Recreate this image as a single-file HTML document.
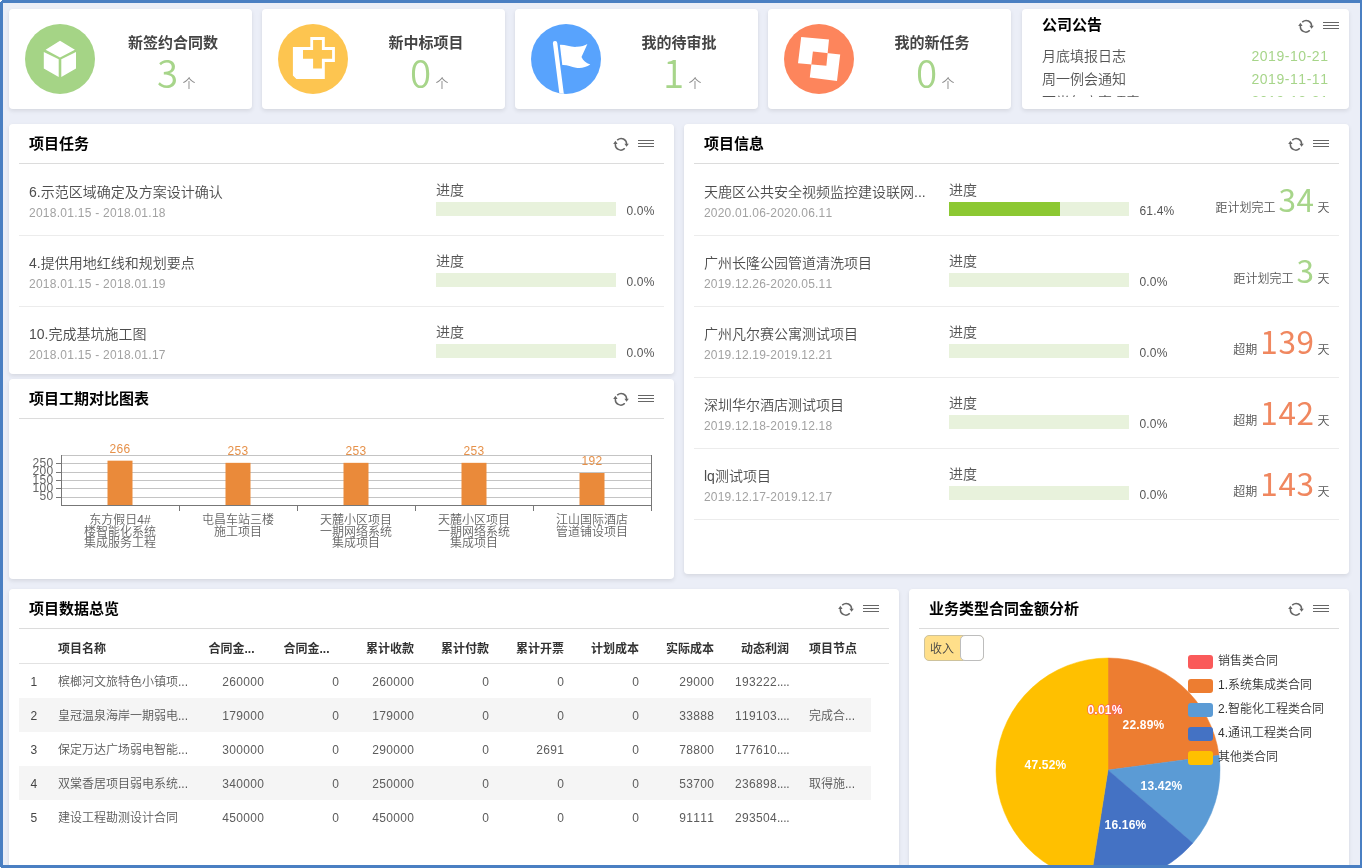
<!DOCTYPE html>
<html lang="zh-CN">
<head>
<meta charset="utf-8">
<title>项目管理工作台</title>
<style>
*{box-sizing:border-box;margin:0;padding:0}
html,body{width:1362px;height:868px;overflow:hidden}
body{background:#ebeef7;font-kerning:none;font-weight:350;font-family:"Liberation Sans","Noto Sans CJK SC",sans-serif;position:relative;color:#555;font-size:14px}
#app{position:absolute;left:0;top:0;width:1362px;height:868px;overflow:hidden;transform:translateZ(0);-webkit-font-smoothing:antialiased}
.a{position:absolute}
.t{position:absolute;white-space:nowrap;line-height:20px;height:20px}
.card{position:absolute;background:#fff;border-radius:4px;box-shadow:0 2px 4px rgba(0,0,0,.09),0 0 4px rgba(0,0,0,.025)}
.panel{position:absolute;background:#fff;border-radius:4px;box-shadow:0 2px 4px rgba(0,0,0,.09),0 0 4px rgba(0,0,0,.025);overflow:hidden}
.hr{position:absolute;height:1px;background:#dcdcdc}
.hr2{position:absolute;height:1px;background:#ececec}
.bar{position:absolute;height:14px;background:#e8f2dc}
.bar i{position:absolute;left:0;top:0;bottom:0;background:#8cc832}
.ico{position:absolute}
.frame{position:absolute;background:#4a7fc2}
</style>
</head>
<body>
<div id="app">
<div class="card" style="left:9px;top:9px;width:243px;height:100px"></div>
<svg class="ico" style="left:25px;top:24px" width="70" height="70" viewBox="0 0 70 70"><defs><clipPath id="c0"><circle cx="35" cy="35" r="35"/></clipPath></defs><circle cx="35" cy="35" r="35" fill="#a5d486"/><g clip-path="url(#c0)"><path fill="#fff" d="M35 16.8L49.9 25.8L35 33.5L20.6 25.8Z M18.8 27.9L33.7 35.2V53L18.8 44.4Z M36.3 35.2L51 27.9V44.4L36.3 53Z"/></g></svg>
<div class="t" style="top:32.5px;font-size:15px;color:#444;line-height:20px;height:20px;font-weight:700;left:-127px;width:600px;text-align:center;">新签约合同数</div>
<div class="t" style="top:47px;font-size:38.5px;color:#a7d58a;line-height:48px;height:48px;left:-132.5px;width:600px;text-align:center;font-family:'Noto Sans CJK SC','Liberation Sans',sans-serif;">3</div>
<div class="t" style="top:73.5px;font-size:13px;color:#8c8c8c;line-height:20px;height:20px;font-weight:350;left:182.5px;">个</div>
<div class="card" style="left:262px;top:9px;width:243px;height:100px"></div>
<svg class="ico" style="left:278px;top:24px" width="70" height="70" viewBox="0 0 70 70"><defs><clipPath id="c1"><circle cx="35" cy="35" r="35"/></clipPath></defs><circle cx="35" cy="35" r="35" fill="#fdc550"/><g clip-path="url(#c1)"><path fill="#fff" d="M14.9 23H32.3V13H46.8V23H56.9V37.9H46.8V55.1H18.4L14.9 51.6Z"/><path fill="#fdc550" d="M35.1 15.9H43.9V26H54.1V34.8H43.9V44.4H35.1V34.8H25V26H35.1Z"/></g></svg>
<div class="t" style="top:32.5px;font-size:15px;color:#444;line-height:20px;height:20px;font-weight:700;left:126px;width:600px;text-align:center;">新中标项目</div>
<div class="t" style="top:47px;font-size:38.5px;color:#a7d58a;line-height:48px;height:48px;left:120.5px;width:600px;text-align:center;font-family:'Noto Sans CJK SC','Liberation Sans',sans-serif;">0</div>
<div class="t" style="top:73.5px;font-size:13px;color:#8c8c8c;line-height:20px;height:20px;font-weight:350;left:435.5px;">个</div>
<div class="card" style="left:515px;top:9px;width:243px;height:100px"></div>
<svg class="ico" style="left:531px;top:24px" width="70" height="70" viewBox="0 0 70 70"><defs><clipPath id="c2"><circle cx="35" cy="35" r="35"/></clipPath></defs><circle cx="35" cy="35" r="35" fill="#58a3fd"/><g clip-path="url(#c2)"><path fill="none" stroke="#fff" stroke-width="4.4" stroke-linecap="round" d="M24.1 19.3L30.9 72"/><path fill="#fff" d="M28.9 20.9C34 20.5 40 23.5 46 22.8C50 22.4 54 21.5 56.4 19.9L50.5 33C52 36.5 55 39 59.3 40.6C55 43.5 50 44.6 45 43.8C40 42.8 36 40.7 31.3 41Z"/></g></svg>
<div class="t" style="top:32.5px;font-size:15px;color:#444;line-height:20px;height:20px;font-weight:700;left:379px;width:600px;text-align:center;">我的待审批</div>
<div class="t" style="top:47px;font-size:38.5px;color:#a7d58a;line-height:48px;height:48px;left:373.5px;width:600px;text-align:center;font-family:'Noto Sans CJK SC','Liberation Sans',sans-serif;">1</div>
<div class="t" style="top:73.5px;font-size:13px;color:#8c8c8c;line-height:20px;height:20px;font-weight:350;left:688.5px;">个</div>
<div class="card" style="left:768px;top:9px;width:243px;height:100px"></div>
<svg class="ico" style="left:784px;top:24px" width="70" height="70" viewBox="0 0 70 70"><defs><clipPath id="c3"><circle cx="35" cy="35" r="35"/></clipPath></defs><circle cx="35" cy="35" r="35" fill="#fd855c"/><g clip-path="url(#c3)"><path fill="#fff" fill-rule="evenodd" d="M17.2 13L45 15.6L42.4 41.8L14 39.3Z M28.9 27.5L56.2 30.4L53 56.9L25.8 53.5Z"/></g></svg>
<div class="t" style="top:32.5px;font-size:15px;color:#444;line-height:20px;height:20px;font-weight:700;left:632px;width:600px;text-align:center;">我的新任务</div>
<div class="t" style="top:47px;font-size:38.5px;color:#a7d58a;line-height:48px;height:48px;left:626.5px;width:600px;text-align:center;font-family:'Noto Sans CJK SC','Liberation Sans',sans-serif;">0</div>
<div class="t" style="top:73.5px;font-size:13px;color:#8c8c8c;line-height:20px;height:20px;font-weight:350;left:941.5px;">个</div>
<div class="card" style="left:1022px;top:9px;width:327px;height:100px;overflow:hidden">
</div>
<div class="t" style="top:15px;font-size:15px;color:#000;line-height:20px;height:20px;font-weight:700;left:1042px;">公司公告</div>
<svg class="ico" style="left:1298px;top:19px" width="42" height="14" viewBox="0 0 42 14">
<g transform="translate(0 0.45)"><g fill="none" stroke="#666" stroke-width="1.45" stroke-linecap="round">
<path d="M4.6 2.4A5.4 5.4 0 0 1 13.6 6.6"/><path d="M11.4 11.2A5.4 5.4 0 0 1 2.4 6.6"/>
</g>
<path d="M11.4 6.2h4.4L13.6 9.2z" fill="#666"/><path d="M0.2 6.6h4.4L2.4 3.4z" fill="#666"/></g>
<g stroke="#666" stroke-width="1.1"><path d="M25 3.5h16M25 6.5h16M25 9.5h16"/></g>
</svg>
<div class="a" style="left:1022px;top:9px;width:327px;height:88px;overflow:hidden">
<div class="t" style="left:20px;top:36.5px;font-size:14px;color:#555">月底填报日志</div>
<div class="t" style="right:21px;top:36.5px;font-size:14px;color:#a7d58a;letter-spacing:0.55px;margin-right:-0.55px">2019-10-21</div>
<div class="t" style="left:20px;top:60px;font-size:14px;color:#555">周一例会通知</div>
<div class="t" style="right:21px;top:60px;font-size:14px;color:#a7d58a;letter-spacing:0.55px;margin-right:-0.55px">2019-11-11</div>
<div class="t" style="left:20px;top:83.2px;font-size:14px;color:#555">下半年度事项表</div>
<div class="t" style="right:21px;top:81.9px;font-size:14px;color:#a7d58a;letter-spacing:0.55px;margin-right:-0.55px">2019-12-31</div>
</div>
<div class="panel" style="left:9px;top:124px;width:665px;height:250px"></div>
<div class="t" style="top:134px;font-size:15px;color:#000;line-height:20px;height:20px;font-weight:700;left:29px;">项目任务</div>
<div class="hr" style="left:19px;top:163px;width:645px"></div>
<svg class="ico" style="left:613px;top:137px" width="42" height="14" viewBox="0 0 42 14">
<g transform="translate(0 0.45)"><g fill="none" stroke="#666" stroke-width="1.45" stroke-linecap="round">
<path d="M4.6 2.4A5.4 5.4 0 0 1 13.6 6.6"/><path d="M11.4 11.2A5.4 5.4 0 0 1 2.4 6.6"/>
</g>
<path d="M11.4 6.2h4.4L13.6 9.2z" fill="#666"/><path d="M0.2 6.6h4.4L2.4 3.4z" fill="#666"/></g>
<g stroke="#666" stroke-width="1.1"><path d="M25 3.5h16M25 6.5h16M25 9.5h16"/></g>
</svg>
<div class="a" style="left:0;top:0;width:1362px;height:374px;overflow:hidden">
<div class="t" style="top:182px;font-size:14px;color:#4d4d4d;line-height:20px;height:20px;left:29px;">6.示范区域确定及方案设计确认</div>
<div class="t" style="top:203px;font-size:12px;color:#a2a2a2;line-height:20px;height:20px;letter-spacing:0.26px;left:29px;">2018.01.15 - 2018.01.18</div>
<div class="t" style="top:180px;font-size:14px;color:#555;line-height:20px;height:20px;left:436px;">进度</div>
<div class="bar" style="left:436px;top:202px;width:180px"><i style="width:0%"></i></div>
<div class="t" style="top:200.5px;font-size:12px;color:#555;line-height:20px;height:20px;letter-spacing:0.15px;left:626.5px;">0.0%</div>
<div class="hr2" style="left:19px;top:235px;width:645px"></div>
<div class="t" style="top:253px;font-size:14px;color:#4d4d4d;line-height:20px;height:20px;left:29px;">4.提供用地红线和规划要点</div>
<div class="t" style="top:274px;font-size:12px;color:#a2a2a2;line-height:20px;height:20px;letter-spacing:0.26px;left:29px;">2018.01.15 - 2018.01.19</div>
<div class="t" style="top:251px;font-size:14px;color:#555;line-height:20px;height:20px;left:436px;">进度</div>
<div class="bar" style="left:436px;top:273px;width:180px"><i style="width:0%"></i></div>
<div class="t" style="top:271.5px;font-size:12px;color:#555;line-height:20px;height:20px;letter-spacing:0.15px;left:626.5px;">0.0%</div>
<div class="hr2" style="left:19px;top:306px;width:645px"></div>
<div class="t" style="top:324px;font-size:14px;color:#4d4d4d;line-height:20px;height:20px;left:29px;">10.完成基坑施工图</div>
<div class="t" style="top:345px;font-size:12px;color:#a2a2a2;line-height:20px;height:20px;letter-spacing:0.26px;left:29px;">2018.01.15 - 2018.01.17</div>
<div class="t" style="top:322px;font-size:14px;color:#555;line-height:20px;height:20px;left:436px;">进度</div>
<div class="bar" style="left:436px;top:344px;width:180px"><i style="width:0%"></i></div>
<div class="t" style="top:342.5px;font-size:12px;color:#555;line-height:20px;height:20px;letter-spacing:0.15px;left:626.5px;">0.0%</div>
<div class="hr2" style="left:19px;top:377px;width:645px"></div>
</div>
<div class="panel" style="left:684px;top:124px;width:665px;height:450px"></div>
<div class="t" style="top:134px;font-size:15px;color:#000;line-height:20px;height:20px;font-weight:700;left:704px;">项目信息</div>
<div class="hr" style="left:694px;top:163px;width:645px"></div>
<svg class="ico" style="left:1288px;top:137px" width="42" height="14" viewBox="0 0 42 14">
<g transform="translate(0 0.45)"><g fill="none" stroke="#666" stroke-width="1.45" stroke-linecap="round">
<path d="M4.6 2.4A5.4 5.4 0 0 1 13.6 6.6"/><path d="M11.4 11.2A5.4 5.4 0 0 1 2.4 6.6"/>
</g>
<path d="M11.4 6.2h4.4L13.6 9.2z" fill="#666"/><path d="M0.2 6.6h4.4L2.4 3.4z" fill="#666"/></g>
<g stroke="#666" stroke-width="1.1"><path d="M25 3.5h16M25 6.5h16M25 9.5h16"/></g>
</svg>
<div class="a" style="left:0;top:0;width:1362px;height:574px;overflow:hidden">
<div class="t" style="top:182px;font-size:14px;color:#4d4d4d;line-height:20px;height:20px;left:704px;">天鹿区公共安全视频监控建设联网...</div>
<div class="t" style="top:203px;font-size:12px;color:#a2a2a2;line-height:20px;height:20px;letter-spacing:0.2px;left:704px;">2020.01.06-2020.06.11</div>
<div class="t" style="top:180px;font-size:14px;color:#555;line-height:20px;height:20px;left:949px;">进度</div>
<div class="bar" style="left:949px;top:202px;width:180px"><i style="width:61.4%"></i></div>
<div class="t" style="top:200.5px;font-size:12px;color:#555;line-height:20px;height:20px;letter-spacing:0.15px;left:1139.5px;">61.4%</div>
<div class="hr2" style="left:694px;top:235px;width:645px"></div>
<div class="t" style="right:32.5px;top:177.7px;height:40px;line-height:40px;font-size:12px;color:#555"><span>距计划完工</span><span style="font-size:31.5px;font-weight:400;letter-spacing:0.6px;color:#a7d58a;margin:0 2.9px 0 3px;font-family:'Noto Sans CJK SC','Liberation Sans',sans-serif;">34</span><span>天</span></div>
<div class="t" style="top:253px;font-size:14px;color:#4d4d4d;line-height:20px;height:20px;left:704px;">广州长隆公园管道清洗项目</div>
<div class="t" style="top:274px;font-size:12px;color:#a2a2a2;line-height:20px;height:20px;letter-spacing:0.2px;left:704px;">2019.12.26-2020.05.11</div>
<div class="t" style="top:251px;font-size:14px;color:#555;line-height:20px;height:20px;left:949px;">进度</div>
<div class="bar" style="left:949px;top:273px;width:180px"><i style="width:0%"></i></div>
<div class="t" style="top:271.5px;font-size:12px;color:#555;line-height:20px;height:20px;letter-spacing:0.15px;left:1139.5px;">0.0%</div>
<div class="hr2" style="left:694px;top:306px;width:645px"></div>
<div class="t" style="right:32.5px;top:248.7px;height:40px;line-height:40px;font-size:12px;color:#555"><span>距计划完工</span><span style="font-size:31.5px;font-weight:400;letter-spacing:0.6px;color:#a7d58a;margin:0 2.9px 0 3px;font-family:'Noto Sans CJK SC','Liberation Sans',sans-serif;">3</span><span>天</span></div>
<div class="t" style="top:324px;font-size:14px;color:#4d4d4d;line-height:20px;height:20px;left:704px;">广州凡尔赛公寓测试项目</div>
<div class="t" style="top:345px;font-size:12px;color:#a2a2a2;line-height:20px;height:20px;letter-spacing:0.2px;left:704px;">2019.12.19-2019.12.21</div>
<div class="t" style="top:322px;font-size:14px;color:#555;line-height:20px;height:20px;left:949px;">进度</div>
<div class="bar" style="left:949px;top:344px;width:180px"><i style="width:0%"></i></div>
<div class="t" style="top:342.5px;font-size:12px;color:#555;line-height:20px;height:20px;letter-spacing:0.15px;left:1139.5px;">0.0%</div>
<div class="hr2" style="left:694px;top:377px;width:645px"></div>
<div class="t" style="right:32.5px;top:319.7px;height:40px;line-height:40px;font-size:12px;color:#555"><span>超期</span><span style="font-size:31.5px;font-weight:400;letter-spacing:0.6px;color:#f0875f;margin:0 2.9px 0 3px;font-family:'Noto Sans CJK SC','Liberation Sans',sans-serif;">139</span><span>天</span></div>
<div class="t" style="top:395px;font-size:14px;color:#4d4d4d;line-height:20px;height:20px;left:704px;">深圳华尔酒店测试项目</div>
<div class="t" style="top:416px;font-size:12px;color:#a2a2a2;line-height:20px;height:20px;letter-spacing:0.2px;left:704px;">2019.12.18-2019.12.18</div>
<div class="t" style="top:393px;font-size:14px;color:#555;line-height:20px;height:20px;left:949px;">进度</div>
<div class="bar" style="left:949px;top:415px;width:180px"><i style="width:0%"></i></div>
<div class="t" style="top:413.5px;font-size:12px;color:#555;line-height:20px;height:20px;letter-spacing:0.15px;left:1139.5px;">0.0%</div>
<div class="hr2" style="left:694px;top:448px;width:645px"></div>
<div class="t" style="right:32.5px;top:390.7px;height:40px;line-height:40px;font-size:12px;color:#555"><span>超期</span><span style="font-size:31.5px;font-weight:400;letter-spacing:0.6px;color:#f0875f;margin:0 2.9px 0 3px;font-family:'Noto Sans CJK SC','Liberation Sans',sans-serif;">142</span><span>天</span></div>
<div class="t" style="top:466px;font-size:14px;color:#4d4d4d;line-height:20px;height:20px;left:704px;">lq测试项目</div>
<div class="t" style="top:487px;font-size:12px;color:#a2a2a2;line-height:20px;height:20px;letter-spacing:0.2px;left:704px;">2019.12.17-2019.12.17</div>
<div class="t" style="top:464px;font-size:14px;color:#555;line-height:20px;height:20px;left:949px;">进度</div>
<div class="bar" style="left:949px;top:486px;width:180px"><i style="width:0%"></i></div>
<div class="t" style="top:484.5px;font-size:12px;color:#555;line-height:20px;height:20px;letter-spacing:0.15px;left:1139.5px;">0.0%</div>
<div class="hr2" style="left:694px;top:519px;width:645px"></div>
<div class="t" style="right:32.5px;top:461.7px;height:40px;line-height:40px;font-size:12px;color:#555"><span>超期</span><span style="font-size:31.5px;font-weight:400;letter-spacing:0.6px;color:#f0875f;margin:0 2.9px 0 3px;font-family:'Noto Sans CJK SC','Liberation Sans',sans-serif;">143</span><span>天</span></div>
</div>
<div class="panel" style="left:9px;top:379px;width:665px;height:200px"></div>
<div class="t" style="top:389px;font-size:15px;color:#000;line-height:20px;height:20px;font-weight:700;left:29px;">项目工期对比图表</div>
<div class="hr" style="left:19px;top:418px;width:645px"></div>
<svg class="ico" style="left:613px;top:392px" width="42" height="14" viewBox="0 0 42 14">
<g transform="translate(0 0.45)"><g fill="none" stroke="#666" stroke-width="1.45" stroke-linecap="round">
<path d="M4.6 2.4A5.4 5.4 0 0 1 13.6 6.6"/><path d="M11.4 11.2A5.4 5.4 0 0 1 2.4 6.6"/>
</g>
<path d="M11.4 6.2h4.4L13.6 9.2z" fill="#666"/><path d="M0.2 6.6h4.4L2.4 3.4z" fill="#666"/></g>
<g stroke="#666" stroke-width="1.1"><path d="M25 3.5h16M25 6.5h16M25 9.5h16"/></g>
</svg>
<svg class="ico" style="left:9px;top:419px" width="665" height="160" viewBox="9 419 665 160" font-family="Liberation Sans, Noto Sans CJK SC, sans-serif" font-size="12">
<rect x="61" y="497" width="590" height="1" fill="#c4c4c4"/>
<rect x="56" y="497" width="5" height="1" fill="#777"/>
<text x="53.4" y="500.3" text-anchor="end" fill="#666" letter-spacing="0.3">50</text>
<rect x="61" y="488" width="590" height="1" fill="#c4c4c4"/>
<rect x="56" y="488" width="5" height="1" fill="#777"/>
<text x="53.4" y="491.9" text-anchor="end" fill="#666" letter-spacing="0.3">100</text>
<rect x="61" y="480" width="590" height="1" fill="#c4c4c4"/>
<rect x="56" y="480" width="5" height="1" fill="#777"/>
<text x="53.4" y="483.6" text-anchor="end" fill="#666" letter-spacing="0.3">150</text>
<rect x="61" y="472" width="590" height="1" fill="#c4c4c4"/>
<rect x="56" y="472" width="5" height="1" fill="#777"/>
<text x="53.4" y="475.3" text-anchor="end" fill="#666" letter-spacing="0.3">200</text>
<rect x="61" y="463" width="590" height="1" fill="#c4c4c4"/>
<rect x="56" y="463" width="5" height="1" fill="#777"/>
<text x="53.4" y="466.9" text-anchor="end" fill="#666" letter-spacing="0.3">250</text>
<rect x="61" y="455" width="590" height="1" fill="#c4c4c4"/>
<rect x="107.5" y="460.67" width="25" height="44.33" fill="#ea8a3a"/>
<text x="120" y="452.5" text-anchor="middle" fill="#e6914a" letter-spacing="0.3">266</text>
<text x="120" y="523.8" text-anchor="middle" fill="#666">东方假日4#</text>
<text x="120" y="535.5" text-anchor="middle" fill="#666">楼智能化系统</text>
<text x="120" y="547.2" text-anchor="middle" fill="#666">集成服务工程</text>
<rect x="225.5" y="462.83" width="25" height="42.17" fill="#ea8a3a"/>
<text x="238" y="454.6" text-anchor="middle" fill="#e6914a" letter-spacing="0.3">253</text>
<text x="238" y="523.8" text-anchor="middle" fill="#666">屯昌车站三楼</text>
<text x="238" y="535.5" text-anchor="middle" fill="#666">施工项目</text>
<rect x="343.5" y="462.83" width="25" height="42.17" fill="#ea8a3a"/>
<text x="356" y="454.6" text-anchor="middle" fill="#e6914a" letter-spacing="0.3">253</text>
<text x="356" y="523.8" text-anchor="middle" fill="#666">天麓小区项目</text>
<text x="356" y="535.5" text-anchor="middle" fill="#666">一期网络系统</text>
<text x="356" y="547.2" text-anchor="middle" fill="#666">集成项目</text>
<rect x="461.5" y="462.83" width="25" height="42.17" fill="#ea8a3a"/>
<text x="474" y="454.6" text-anchor="middle" fill="#e6914a" letter-spacing="0.3">253</text>
<text x="474" y="523.8" text-anchor="middle" fill="#666">天麓小区项目</text>
<text x="474" y="535.5" text-anchor="middle" fill="#666">一期网络系统</text>
<text x="474" y="547.2" text-anchor="middle" fill="#666">集成项目</text>
<rect x="579.5" y="473.00" width="25" height="32.00" fill="#ea8a3a"/>
<text x="592" y="464.8" text-anchor="middle" fill="#e6914a" letter-spacing="0.3">192</text>
<text x="592" y="523.8" text-anchor="middle" fill="#666">江山国际酒店</text>
<text x="592" y="535.5" text-anchor="middle" fill="#666">管道铺设项目</text>
<rect x="61" y="455" width="1" height="51" fill="#777"/>
<rect x="61" y="505" width="591" height="1" fill="#777"/>
<rect x="651" y="455" width="1" height="56" fill="#777"/>
<rect x="179" y="505" width="1" height="6" fill="#777"/>
<rect x="297" y="505" width="1" height="6" fill="#777"/>
<rect x="415" y="505" width="1" height="6" fill="#777"/>
<rect x="533" y="505" width="1" height="6" fill="#777"/>
</svg>
<div class="panel" style="left:9px;top:589px;width:890px;height:300px"></div>
<div class="t" style="top:599px;font-size:15px;color:#000;line-height:20px;height:20px;font-weight:700;left:29px;">项目数据总览</div>
<div class="hr" style="left:19px;top:628px;width:870px"></div>
<svg class="ico" style="left:838px;top:602px" width="42" height="14" viewBox="0 0 42 14">
<g transform="translate(0 0.45)"><g fill="none" stroke="#666" stroke-width="1.45" stroke-linecap="round">
<path d="M4.6 2.4A5.4 5.4 0 0 1 13.6 6.6"/><path d="M11.4 11.2A5.4 5.4 0 0 1 2.4 6.6"/>
</g>
<path d="M11.4 6.2h4.4L13.6 9.2z" fill="#666"/><path d="M0.2 6.6h4.4L2.4 3.4z" fill="#666"/></g>
<g stroke="#666" stroke-width="1.1"><path d="M25 3.5h16M25 6.5h16M25 9.5h16"/></g>
</svg>
<div class="hr" style="left:19px;top:663px;width:870px;background:#e2e2e2"></div>
<div class="t" style="top:638.5px;font-size:12px;color:#333;line-height:20px;height:20px;font-weight:700;left:58px;">项目名称</div>
<div class="t" style="top:638.5px;font-size:12px;color:#333;line-height:20px;height:20px;font-weight:700;right:1107.5px;">合同金...</div>
<div class="t" style="top:638.5px;font-size:12px;color:#333;line-height:20px;height:20px;font-weight:700;right:1032.5px;">合同金...</div>
<div class="t" style="top:638.5px;font-size:12px;color:#333;line-height:20px;height:20px;font-weight:700;right:948px;">累计收款</div>
<div class="t" style="top:638.5px;font-size:12px;color:#333;line-height:20px;height:20px;font-weight:700;right:873px;">累计付款</div>
<div class="t" style="top:638.5px;font-size:12px;color:#333;line-height:20px;height:20px;font-weight:700;right:798px;">累计开票</div>
<div class="t" style="top:638.5px;font-size:12px;color:#333;line-height:20px;height:20px;font-weight:700;right:723px;">计划成本</div>
<div class="t" style="top:638.5px;font-size:12px;color:#333;line-height:20px;height:20px;font-weight:700;right:648px;">实际成本</div>
<div class="t" style="top:638.5px;font-size:12px;color:#333;line-height:20px;height:20px;font-weight:700;right:573px;">动态利润</div>
<div class="t" style="top:638.5px;font-size:12px;color:#333;line-height:20px;height:20px;font-weight:700;left:809px;">项目节点</div>
<div class="t" style="top:671.5px;font-size:12px;color:#444;line-height:20px;height:20px;left:30.5px;">1</div>
<div class="t" style="top:671.5px;font-size:12px;color:#595959;line-height:20px;height:20px;left:58px;">槟榔河文旅特色小镇项...</div>
<div class="t" style="top:671.5px;font-size:12px;color:#5c5c5c;line-height:20px;height:20px;letter-spacing:0.33px;right:1098px;margin-right:-0.33px;">260000</div>
<div class="t" style="top:671.5px;font-size:12px;color:#5c5c5c;line-height:20px;height:20px;letter-spacing:0.33px;right:1023px;margin-right:-0.33px;">0</div>
<div class="t" style="top:671.5px;font-size:12px;color:#5c5c5c;line-height:20px;height:20px;letter-spacing:0.33px;right:948px;margin-right:-0.33px;">260000</div>
<div class="t" style="top:671.5px;font-size:12px;color:#5c5c5c;line-height:20px;height:20px;letter-spacing:0.33px;right:873px;margin-right:-0.33px;">0</div>
<div class="t" style="top:671.5px;font-size:12px;color:#5c5c5c;line-height:20px;height:20px;letter-spacing:0.33px;right:798px;margin-right:-0.33px;">0</div>
<div class="t" style="top:671.5px;font-size:12px;color:#5c5c5c;line-height:20px;height:20px;letter-spacing:0.33px;right:723px;margin-right:-0.33px;">0</div>
<div class="t" style="top:671.5px;font-size:12px;color:#5c5c5c;line-height:20px;height:20px;letter-spacing:0.33px;right:648px;margin-right:-0.33px;">29000</div>
<div class="t" style="top:671.5px;font-size:12px;color:#5c5c5c;line-height:20px;height:20px;letter-spacing:0.33px;right:573px;margin-right:-0.33px;">193222<span style="letter-spacing:-0.25px">....</span></div>
<div class="a" style="left:19px;top:698px;width:852px;height:34px;background:#f5f5f5"></div>
<div class="t" style="top:705.5px;font-size:12px;color:#444;line-height:20px;height:20px;left:30.5px;">2</div>
<div class="t" style="top:705.5px;font-size:12px;color:#595959;line-height:20px;height:20px;left:58px;">皇冠温泉海岸一期弱电...</div>
<div class="t" style="top:705.5px;font-size:12px;color:#5c5c5c;line-height:20px;height:20px;letter-spacing:0.33px;right:1098px;margin-right:-0.33px;">179000</div>
<div class="t" style="top:705.5px;font-size:12px;color:#5c5c5c;line-height:20px;height:20px;letter-spacing:0.33px;right:1023px;margin-right:-0.33px;">0</div>
<div class="t" style="top:705.5px;font-size:12px;color:#5c5c5c;line-height:20px;height:20px;letter-spacing:0.33px;right:948px;margin-right:-0.33px;">179000</div>
<div class="t" style="top:705.5px;font-size:12px;color:#5c5c5c;line-height:20px;height:20px;letter-spacing:0.33px;right:873px;margin-right:-0.33px;">0</div>
<div class="t" style="top:705.5px;font-size:12px;color:#5c5c5c;line-height:20px;height:20px;letter-spacing:0.33px;right:798px;margin-right:-0.33px;">0</div>
<div class="t" style="top:705.5px;font-size:12px;color:#5c5c5c;line-height:20px;height:20px;letter-spacing:0.33px;right:723px;margin-right:-0.33px;">0</div>
<div class="t" style="top:705.5px;font-size:12px;color:#5c5c5c;line-height:20px;height:20px;letter-spacing:0.33px;right:648px;margin-right:-0.33px;">33888</div>
<div class="t" style="top:705.5px;font-size:12px;color:#5c5c5c;line-height:20px;height:20px;letter-spacing:0.33px;right:573px;margin-right:-0.33px;">119103<span style="letter-spacing:-0.25px">....</span></div>
<div class="t" style="top:705.5px;font-size:12px;color:#595959;line-height:20px;height:20px;left:809px;">完成合...</div>
<div class="t" style="top:739.5px;font-size:12px;color:#444;line-height:20px;height:20px;left:30.5px;">3</div>
<div class="t" style="top:739.5px;font-size:12px;color:#595959;line-height:20px;height:20px;left:58px;">保定万达广场弱电智能...</div>
<div class="t" style="top:739.5px;font-size:12px;color:#5c5c5c;line-height:20px;height:20px;letter-spacing:0.33px;right:1098px;margin-right:-0.33px;">300000</div>
<div class="t" style="top:739.5px;font-size:12px;color:#5c5c5c;line-height:20px;height:20px;letter-spacing:0.33px;right:1023px;margin-right:-0.33px;">0</div>
<div class="t" style="top:739.5px;font-size:12px;color:#5c5c5c;line-height:20px;height:20px;letter-spacing:0.33px;right:948px;margin-right:-0.33px;">290000</div>
<div class="t" style="top:739.5px;font-size:12px;color:#5c5c5c;line-height:20px;height:20px;letter-spacing:0.33px;right:873px;margin-right:-0.33px;">0</div>
<div class="t" style="top:739.5px;font-size:12px;color:#5c5c5c;line-height:20px;height:20px;letter-spacing:0.33px;right:798px;margin-right:-0.33px;">2691</div>
<div class="t" style="top:739.5px;font-size:12px;color:#5c5c5c;line-height:20px;height:20px;letter-spacing:0.33px;right:723px;margin-right:-0.33px;">0</div>
<div class="t" style="top:739.5px;font-size:12px;color:#5c5c5c;line-height:20px;height:20px;letter-spacing:0.33px;right:648px;margin-right:-0.33px;">78800</div>
<div class="t" style="top:739.5px;font-size:12px;color:#5c5c5c;line-height:20px;height:20px;letter-spacing:0.33px;right:573px;margin-right:-0.33px;">177610<span style="letter-spacing:-0.25px">....</span></div>
<div class="a" style="left:19px;top:766px;width:852px;height:34px;background:#f5f5f5"></div>
<div class="t" style="top:773.5px;font-size:12px;color:#444;line-height:20px;height:20px;left:30.5px;">4</div>
<div class="t" style="top:773.5px;font-size:12px;color:#595959;line-height:20px;height:20px;left:58px;">双棠香居项目弱电系统...</div>
<div class="t" style="top:773.5px;font-size:12px;color:#5c5c5c;line-height:20px;height:20px;letter-spacing:0.33px;right:1098px;margin-right:-0.33px;">340000</div>
<div class="t" style="top:773.5px;font-size:12px;color:#5c5c5c;line-height:20px;height:20px;letter-spacing:0.33px;right:1023px;margin-right:-0.33px;">0</div>
<div class="t" style="top:773.5px;font-size:12px;color:#5c5c5c;line-height:20px;height:20px;letter-spacing:0.33px;right:948px;margin-right:-0.33px;">250000</div>
<div class="t" style="top:773.5px;font-size:12px;color:#5c5c5c;line-height:20px;height:20px;letter-spacing:0.33px;right:873px;margin-right:-0.33px;">0</div>
<div class="t" style="top:773.5px;font-size:12px;color:#5c5c5c;line-height:20px;height:20px;letter-spacing:0.33px;right:798px;margin-right:-0.33px;">0</div>
<div class="t" style="top:773.5px;font-size:12px;color:#5c5c5c;line-height:20px;height:20px;letter-spacing:0.33px;right:723px;margin-right:-0.33px;">0</div>
<div class="t" style="top:773.5px;font-size:12px;color:#5c5c5c;line-height:20px;height:20px;letter-spacing:0.33px;right:648px;margin-right:-0.33px;">53700</div>
<div class="t" style="top:773.5px;font-size:12px;color:#5c5c5c;line-height:20px;height:20px;letter-spacing:0.33px;right:573px;margin-right:-0.33px;">236898<span style="letter-spacing:-0.25px">....</span></div>
<div class="t" style="top:773.5px;font-size:12px;color:#595959;line-height:20px;height:20px;left:809px;">取得施...</div>
<div class="t" style="top:807.5px;font-size:12px;color:#444;line-height:20px;height:20px;left:30.5px;">5</div>
<div class="t" style="top:807.5px;font-size:12px;color:#595959;line-height:20px;height:20px;left:58px;">建设工程勘测设计合同</div>
<div class="t" style="top:807.5px;font-size:12px;color:#5c5c5c;line-height:20px;height:20px;letter-spacing:0.33px;right:1098px;margin-right:-0.33px;">450000</div>
<div class="t" style="top:807.5px;font-size:12px;color:#5c5c5c;line-height:20px;height:20px;letter-spacing:0.33px;right:1023px;margin-right:-0.33px;">0</div>
<div class="t" style="top:807.5px;font-size:12px;color:#5c5c5c;line-height:20px;height:20px;letter-spacing:0.33px;right:948px;margin-right:-0.33px;">450000</div>
<div class="t" style="top:807.5px;font-size:12px;color:#5c5c5c;line-height:20px;height:20px;letter-spacing:0.33px;right:873px;margin-right:-0.33px;">0</div>
<div class="t" style="top:807.5px;font-size:12px;color:#5c5c5c;line-height:20px;height:20px;letter-spacing:0.33px;right:798px;margin-right:-0.33px;">0</div>
<div class="t" style="top:807.5px;font-size:12px;color:#5c5c5c;line-height:20px;height:20px;letter-spacing:0.33px;right:723px;margin-right:-0.33px;">0</div>
<div class="t" style="top:807.5px;font-size:12px;color:#5c5c5c;line-height:20px;height:20px;letter-spacing:0.33px;right:648px;margin-right:-0.33px;">91111</div>
<div class="t" style="top:807.5px;font-size:12px;color:#5c5c5c;line-height:20px;height:20px;letter-spacing:0.33px;right:573px;margin-right:-0.33px;">293504<span style="letter-spacing:-0.25px">....</span></div>
<div class="panel" style="left:909px;top:589px;width:440px;height:300px"></div>
<div class="t" style="top:599px;font-size:15px;color:#000;line-height:20px;height:20px;font-weight:700;left:929px;">业务类型合同金额分析</div>
<div class="hr" style="left:919px;top:628px;width:420px"></div>
<svg class="ico" style="left:1288px;top:602px" width="42" height="14" viewBox="0 0 42 14">
<g transform="translate(0 0.45)"><g fill="none" stroke="#666" stroke-width="1.45" stroke-linecap="round">
<path d="M4.6 2.4A5.4 5.4 0 0 1 13.6 6.6"/><path d="M11.4 11.2A5.4 5.4 0 0 1 2.4 6.6"/>
</g>
<path d="M11.4 6.2h4.4L13.6 9.2z" fill="#666"/><path d="M0.2 6.6h4.4L2.4 3.4z" fill="#666"/></g>
<g stroke="#666" stroke-width="1.1"><path d="M25 3.5h16M25 6.5h16M25 9.5h16"/></g>
</svg>
<div class="a" style="left:924px;top:635px;width:60px;height:26px;border:1px solid #cdc29c;border-radius:5px;background:#ffdf8a;overflow:hidden"></div>
<div class="a" style="left:960px;top:635px;width:24px;height:26px;border:1px solid #bdbdbd;border-radius:5px;background:#fff"></div>
<div class="t" style="top:639.3px;font-size:12px;color:#444;line-height:20px;height:20px;left:642px;width:600px;text-align:center;">收入</div>
<svg class="ico" style="left:909px;top:629px" width="440" height="239" viewBox="909 629 440 239" font-family="Liberation Sans, Noto Sans CJK SC, sans-serif" font-size="12">
<path d="M1108 770L1108.00 658.00A112 112 0 0 1 1108.07 658.00Z" fill="#fa5a5a" stroke="#fa5a5a" stroke-width="0.5"/>
<path d="M1108 770L1108.07 658.00A112 112 0 0 1 1219.03 755.26Z" fill="#ed7d31" stroke="#ed7d31" stroke-width="0.5"/>
<path d="M1108 770L1219.03 755.26A112 112 0 0 1 1192.84 843.11Z" fill="#5b9bd5" stroke="#5b9bd5" stroke-width="0.5"/>
<path d="M1108 770L1192.84 843.11A112 112 0 0 1 1090.62 880.64Z" fill="#4472c4" stroke="#4472c4" stroke-width="0.5"/>
<path d="M1108 770L1090.62 880.64A112 112 0 0 1 1108.00 658.00Z" fill="#ffc000" stroke="#ffc000" stroke-width="0.5"/>
<text x="1105.0" y="714.3" text-anchor="middle" fill="#fff" stroke="#fa5a5a" stroke-width="1.3" paint-order="stroke" stroke-linejoin="round" font-weight="700" letter-spacing="0.2">0.01%</text>
<text x="1143.5" y="728.8" text-anchor="middle" fill="#fff" stroke="#ed7d31" stroke-width="1.3" paint-order="stroke" stroke-linejoin="round" font-weight="700" letter-spacing="0.2">22.89%</text>
<text x="1161.5" y="789.8" text-anchor="middle" fill="#fff" stroke="#5b9bd5" stroke-width="1.3" paint-order="stroke" stroke-linejoin="round" font-weight="700" letter-spacing="0.2">13.42%</text>
<text x="1125.5" y="829.3" text-anchor="middle" fill="#fff" stroke="#4472c4" stroke-width="1.3" paint-order="stroke" stroke-linejoin="round" font-weight="700" letter-spacing="0.2">16.16%</text>
<text x="1045.5" y="769.3" text-anchor="middle" fill="#fff" stroke="#ffc000" stroke-width="1.3" paint-order="stroke" stroke-linejoin="round" font-weight="700" letter-spacing="0.2">47.52%</text>
<rect x="1188" y="655" width="25" height="14" rx="3" fill="#fa5a5a"/>
<text x="1218" y="665.3" fill="#333">销售类合同</text>
<rect x="1188" y="679" width="25" height="14" rx="3" fill="#ed7d31"/>
<text x="1218" y="689.3" fill="#333">1.系统集成类合同</text>
<rect x="1188" y="703" width="25" height="14" rx="3" fill="#5b9bd5"/>
<text x="1218" y="713.3" fill="#333">2.智能化工程类合同</text>
<rect x="1188" y="727" width="25" height="14" rx="3" fill="#4472c4"/>
<text x="1218" y="737.3" fill="#333">4.通讯工程类合同</text>
<rect x="1188" y="751" width="25" height="14" rx="3" fill="#ffc000"/>
<text x="1218" y="761.3" fill="#333">其他类合同</text>
</svg>
<div class="frame" style="left:0;top:0;width:1362px;height:3px"></div>
<div class="frame" style="left:0;top:0;width:3px;height:868px"></div>
<div class="frame" style="left:1360px;top:0;width:2px;height:868px"></div>
<div class="frame" style="left:0;top:865px;width:1362px;height:3px"></div>
<div class="a" style="left:0;top:0;width:2px;height:1px;background:#fff"></div><div class="a" style="left:0;top:1px;width:1px;height:1px;background:#fff"></div><div class="a" style="left:0;top:867px;width:1px;height:1px;background:#fff"></div>
</div>
</body>
</html>
